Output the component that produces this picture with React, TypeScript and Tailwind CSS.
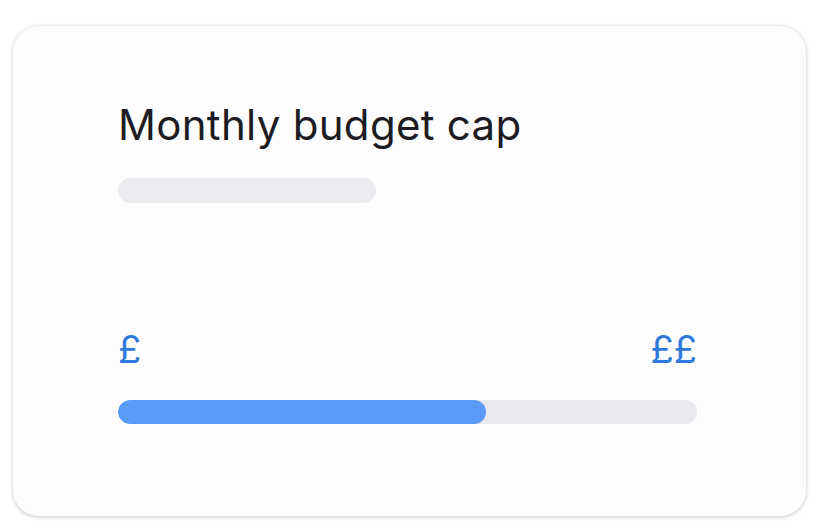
export default function App() {
  const progress = 63.6;

  return (
    <div className="w-[829px] h-[529px] bg-white pt-[26px] pl-[13px]" style={{ fontFamily: 'Inter, "Noto Sans", sans-serif' }}>
      <div className="w-[793px] h-[490px] rounded-[26px] bg-[#fdfdfe] shadow-[0_1px_4px_rgba(0,0,0,0.24)] pl-[105px] pr-[109px] pt-[74px] flex flex-col">
        {/* Header */}
        <h1 className="text-[42px] leading-[50px] tracking-[0.3px] text-[#1c1c22] whitespace-nowrap">Monthly budget cap</h1>
        <div className="mt-[28px] w-[258px] h-[25px] rounded-full bg-[#ebebf0]" />

        {/* Range labels */}
        <div className="mt-[124px] flex items-center justify-between text-[38px] leading-[44px] text-[#2f78dc]">
          <span>£</span>
          <span>££</span>
        </div>

        {/* Progress */}
        <div className="mt-[29px] w-full h-[24px] rounded-full bg-[#e9e9ef] overflow-hidden">
          <div className="h-full rounded-full bg-[#5b9bf8]" style={{ width: `${progress}%` }} />
        </div>
      </div>
    </div>
  );
}
